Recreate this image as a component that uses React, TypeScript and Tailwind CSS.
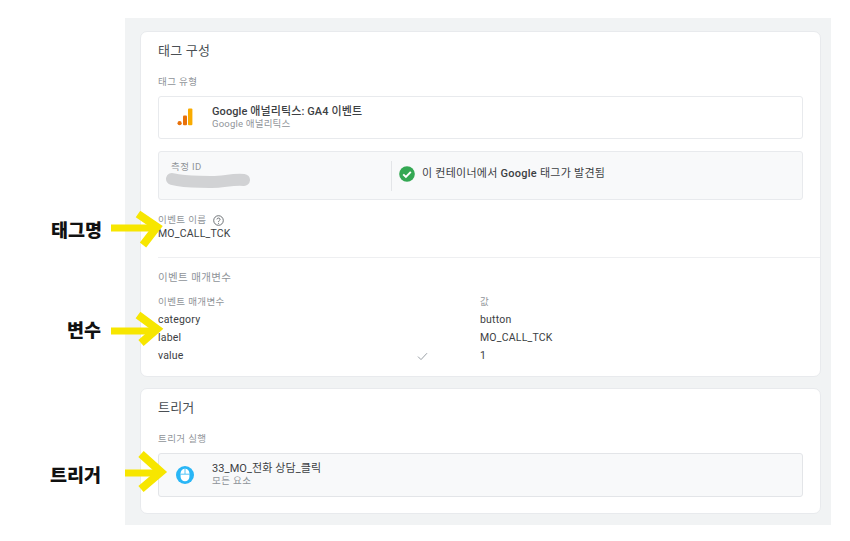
import { ReactNode } from 'react';

const FONT = "font-['Roboto','Noto_Sans_CJK_KR',sans-serif]";

function SectionLabel({ children }: { children: ReactNode }) {
  return <div className="text-[9.5px] leading-[12px] tracking-[0.4px] text-[#8f9499]">{children}</div>;
}

function AnalyticsIcon() {
  return (
    <svg width="16" height="18" viewBox="0 0 16 18">
      <circle cx="2.6" cy="15.2" r="2.1" fill="#e8710a" />
      <rect x="6" y="7.5" width="4" height="9.7" rx="1" fill="#e8710a" />
      <rect x="11" y="0.4" width="4.4" height="16.8" rx="1" fill="#f9ab00" />
    </svg>
  );
}

function MouseBadge() {
  return (
    <svg width="18" height="18" viewBox="0 0 18 18">
      <circle cx="9" cy="9" r="9" fill="#29b6f6" />
      <rect x="4.6" y="2.8" width="8.8" height="12.4" rx="4.4" fill="#fff" />
      <path d="M9 3 V8 M4.6 8.2 H13.4" stroke="#29b6f6" strokeWidth="0.8" />
    </svg>
  );
}

function Arrow({ className, shaft, head }: { className: string; shaft: string; head: string }) {
  return (
    <svg className={`absolute ${className}`} width="60" height="44" viewBox="0 0 60 44" fill="none">
      <path d={shaft} stroke="#f7e600" strokeWidth="7" />
      <path d={head} stroke="#f7e600" strokeWidth="8" />
    </svg>
  );
}

function Note({ className, children }: { className: string; children: ReactNode }) {
  return <div className={`absolute text-[18.5px] leading-[24px] font-black text-[#111] ${className}`}>{children}</div>;
}

const params = [
  { name: 'category', value: 'button', check: false },
  { name: 'label', value: 'MO_CALL_TCK', check: false },
  { name: 'value', value: '1', check: true },
];

export default function App() {
  return (
    <div className={`relative w-[850px] h-[541px] bg-white pl-[125px] pt-[18px] overflow-hidden ${FONT}`}>
      <div className="flex flex-col gap-[11px] w-[706px] h-[507px] bg-[#f1f3f4] pl-[15px] pr-[10px] pt-[13px]">
        <section className="h-[346px] bg-white rounded-[7px] border border-[#e8eaed] pt-[10px]">
          <h2 className="pl-[17px] text-[13px] leading-[18px] tracking-[0.2px] text-[#4a4f54]">태그 구성</h2>
          <div className="pl-[17px] pr-[17px]">
            <div className="mt-[16px]"><SectionLabel>태그 유형</SectionLabel></div>
            <div className="flex items-center h-[43px] mt-[8px] bg-white rounded-[3px] border border-[#e8eaed]">
              <div className="flex justify-center w-[51px] pb-[1px]"><AnalyticsIcon /></div>
              <div className="pl-[2px]">
                <div className="text-[11px] leading-[13px] tracking-[0.1px] font-medium text-[#3c4043]">Google 애널리틱스: GA4 이벤트</div>
                <div className="text-[9.5px] leading-[12px] tracking-[0.2px] text-[#8f9499]">Google 애널리틱스</div>
              </div>
            </div>
            <div className="flex items-center h-[49px] mt-[12px] bg-[#f8f9fa] rounded-[3px] border border-[#e8eaed]">
              <div className="w-[232px] h-full pl-[12px] pt-[9px]">
                <SectionLabel>측정 ID</SectionLabel>
                <svg className="-ml-[7px] -mt-[1px]" width="86" height="16" viewBox="0 0 86 16" fill="none">
                  <path d="M8 7 C24 11 36 9 48 10 C60 10 68 7 80 8" stroke="#d1d2d4" strokeWidth="12" strokeLinecap="round" />
                </svg>
              </div>
              <div className="w-px h-[30px] bg-[#e3e5e8]" />
              <div className="flex items-center gap-[7px] pl-[7px] pb-[3px] text-[11px] text-[#3c4043]">
                <svg width="16" height="16" viewBox="0 0 16 16">
                  <circle cx="8" cy="8" r="7.8" fill="#34a853" />
                  <path d="M4.2 8.3 L6.9 11 L11.8 5.8" stroke="#fff" strokeWidth="1.9" fill="none" />
                </svg>
                <span className="tracking-[0.25px]">이 컨테이너에서 <span className="font-medium">Google</span> 태그가 발견됨</span>
              </div>
            </div>
            <div className="flex items-center gap-[7px] mt-[14px] h-[13px]">
              <span className="text-[9.5px] tracking-[0.4px] text-[#8f9499]">이벤트 이름</span>
              <svg width="11" height="11" viewBox="0 0 11 11" fill="none">
                <circle cx="5.5" cy="5.5" r="4.8" stroke="#5f6368" strokeWidth="0.9" />
                <path d="M3.9 4.4 C3.9 2.6 7.1 2.6 7.1 4.4 C7.1 5.4 5.5 5.5 5.5 6.8" stroke="#5f6368" strokeWidth="0.9" />
                <circle cx="5.5" cy="8.2" r="0.55" fill="#5f6368" />
              </svg>
            </div>
            <div className="text-[10.5px] leading-[14px] tracking-[0.2px] text-[#3c4043]">MO_CALL_TCK</div>
          </div>
          <div className="ml-[17px] mt-[16px] h-px bg-[#eeeff1]" />
          <div className="pl-[17px] mt-[13px] text-[10.5px] leading-[14px] tracking-[0.4px] text-[#8f9499]">이벤트 매개변수</div>
          <div className="grid grid-cols-[322px_1fr] pl-[17px] mt-[11px]">
            <SectionLabel>이벤트 매개변수</SectionLabel>
            <SectionLabel>값</SectionLabel>
          </div>
          <div className="mt-[3px]">
            {params.map((row) => (
              <div key={row.name} className="grid grid-cols-[322px_1fr] h-[18px] pl-[17px] items-center text-[10.5px] tracking-[0.2px] text-[#3c4043]">
                <div className="flex items-center justify-between pr-[52px]">
                  <span>{row.name}</span>
                  {row.check && (
                    <svg width="11" height="9" viewBox="0 0 11 9" fill="none" className="mt-[1px]">
                      <path d="M1 4.6 L4 7.6 L10 1.2" stroke="#9aa0a6" strokeWidth="1" />
                    </svg>
                  )}
                </div>
                <span>{row.value}</span>
              </div>
            ))}
          </div>
        </section>
        <section className="h-[126px] bg-white rounded-[7px] border border-[#e8eaed] pt-[10px] px-[17px]">
          <h2 className="text-[13px] leading-[18px] tracking-[0.2px] text-[#4a4f54]">트리거</h2>
          <div className="mt-[16px]"><SectionLabel>트리거 실행</SectionLabel></div>
          <div className="flex items-center h-[44px] mt-[8px] bg-[#f8f9fa] rounded-[3px] border border-[#e3e5e8]">
            <div className="flex justify-center w-[51px]"><MouseBadge /></div>
            <div className="pl-[2px] pb-[2px]">
              <div className="text-[11px] leading-[13px] tracking-[0.1px] text-[#3c4043]">33_MO_전화 상담_클릭</div>
              <div className="text-[9.5px] leading-[12px] tracking-[0.4px] text-[#8f9499]">모든 요소</div>
            </div>
          </div>
        </section>
      </div>

      <Note className="left-[51px] top-[219px]">태그명</Note>
      <Arrow className="left-[108px] top-[206px]" shaft="M3 22 H44" head="M30 8 L49 21 L35 39" />
      <Note className="left-[67px] top-[319px]">변수</Note>
      <Arrow className="left-[108px] top-[307px]" shaft="M3 24 H44" head="M30 8 L49 22 L33 36" />
      <Note className="left-[50px] top-[464px]">트리거</Note>
      <Arrow className="left-[120px] top-[450px]" shaft="M5 23 H38" head="M21 4 L41 22 L21 39" />
    </div>
  );
}
